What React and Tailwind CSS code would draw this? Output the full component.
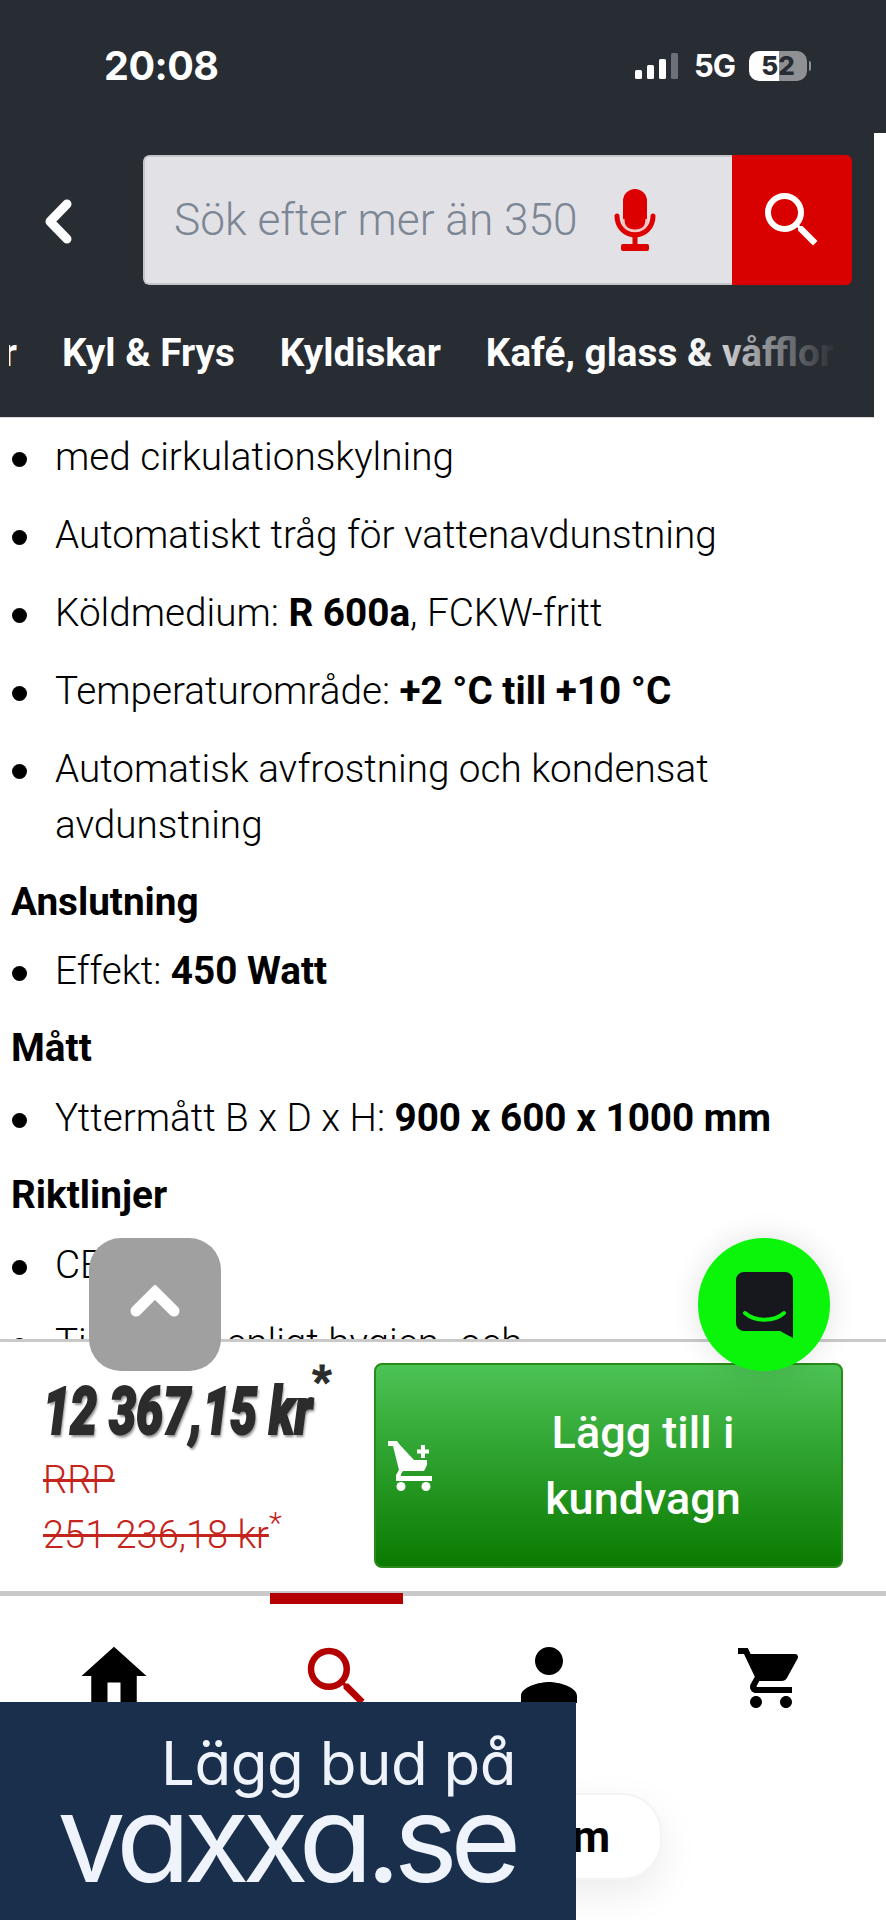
import React from 'react';

const roboto = "font-['Roboto',sans-serif]";

const icons = {
  search: 'M15.5 14h-.79l-.28-.27A6.471 6.471 0 0 0 16 9.5 6.5 6.5 0 1 0 9.5 16c1.61 0 3.09-.59 4.23-1.57l.27.28v.79l5 4.99L20.49 19l-4.99-5zm-6 0C7.01 14 5 11.99 5 9.5S7.01 5 9.5 5 14 7.01 14 9.5 11.99 14 9.5 14z',
  home: 'M10 20v-6h4v6h5v-8h3L12 3 2 12h3v8z',
  person: 'M12 12c2.21 0 4-1.79 4-4s-1.79-4-4-4-4 1.79-4 4 1.79 4 4 4zm0 2c-2.67 0-8 1.34-8 4v2h16v-2c0-2.66-5.33-4-8-4z',
  cart: 'M7 18c-1.1 0-1.99.9-1.99 2S5.9 22 7 22s2-.9 2-2-.9-2-2-2zM1 2v2h2l3.6 7.59-1.35 2.45c-.16.28-.25.61-.25.96 0 1.1.9 2 2 2h12v-2H7.42c-.14 0-.25-.11-.25-.25l.03-.12.9-1.63h7.45c.75 0 1.41-.41 1.75-1.03l3.58-6.49A1.003 1.003 0 0 0 20 4H5.21l-.94-2H1zm16 16c-1.1 0-1.99.9-1.99 2s.89 2 1.99 2 2-.9 2-2-.9-2-2-2z',
};

const Icon = ({ d, className }) => (
  <svg viewBox="0 0 24 24" fill="currentColor" className={className}>
    <path d={d} />
  </svg>
);

const Item = ({ children, className = '' }) => (
  <li className={`flex leading-[56px] ${className}`}>
    <span className="mt-[23px] ml-[12px] mr-[28px] h-[15px] w-[15px] shrink-0 rounded-full bg-black" />
    <span className="flex-1">{children}</span>
  </li>
);

const Heading = ({ children, className = '' }) => (
  <h3 className={`pl-[11px] text-[38.7px] font-bold leading-[56px] text-black ${className}`}>{children}</h3>
);

const StatusBar = () => (
  <div className="flex h-[133px] shrink-0 items-start bg-[#282c33] text-white">
    <span className="ml-[104px] mt-[45px] text-[39.5px] font-bold leading-[42px] font-['Inter',sans-serif] tracking-[-0.5px]">20:08</span>
    <div className="ml-auto mr-[75px] mt-[51px] flex items-center">
      <svg viewBox="0 0 43 26" className="h-[26px] w-[43px]">
        <rect x="0" y="17" width="7" height="9" rx="1.5" fill="#fff" />
        <rect x="12" y="12" width="7" height="14" rx="1.5" fill="#fff" />
        <rect x="24" y="6" width="7" height="20" rx="1.5" fill="#fff" />
        <rect x="36" y="0" width="7" height="26" rx="1.5" fill="#6d7076" />
      </svg>
      <span className="ml-[16px] text-[31px] font-bold leading-[30px] font-['Inter',sans-serif] tracking-[-1px]">5G</span>
      <div className="relative ml-[14px] flex h-[30px] w-[58px] items-center justify-center overflow-hidden rounded-[10px] bg-[linear-gradient(90deg,#ffffff_0%,#ffffff_52%,#8e9094_52%,#8e9094_100%)]">
        <span className="text-[26px] font-extrabold leading-[30px] text-[#282c33] font-['Inter',sans-serif]">52</span>
      </div>
      <span className="ml-[2px] h-[10px] w-[2px] rounded-r bg-[#8e9094]" />
    </div>
  </div>
);

const SearchHeader = () => (
  <div className="h-[285px] w-[874px] shrink-0 border-b border-[#d8d8d8] bg-[#282c33]">
    <div className="flex h-[174px] items-start pt-[22px]">
      <svg viewBox="0 0 29 45" className="ml-[43px] mt-[44px] h-[45px] w-[29px]" fill="none" stroke="#fff" strokeWidth="9" strokeLinecap="round" strokeLinejoin="round">
        <path d="M24 5 7 22.5 24 40" />
      </svg>
      <div className="ml-[71px] flex h-[130px] w-[709px] overflow-hidden rounded-[6px]">
        <div className="flex flex-1 items-center rounded-l-[6px] border-2 border-r-0 border-[#c5c5c9] bg-[#e2e2e6] pl-[29px]">
          <span className={`${roboto} text-[44.2px] font-light text-[#7c8694]`}>Sök efter mer än 350</span>
          <svg viewBox="0 0 42 62" className="ml-[36px] h-[62px] w-[42px]">
            <rect x="9" y="0" width="24" height="45" rx="12" fill="#dc0000" />
            <path d="M9 30c0 8 5 12 12 12s12-4 12-12" fill="none" stroke="#f6c6c6" strokeWidth="3" />
            <path d="M3 27c0 11 8 19 18 19s18-8 18-19" fill="none" stroke="#dc0000" strokeWidth="5" strokeLinecap="round" />
            <rect x="18.5" y="46" width="5" height="11" fill="#dc0000" />
            <rect x="7" y="55" width="28" height="7" rx="2" fill="#dc0000" />
          </svg>
        </div>
        <div className="flex w-[120px] items-center justify-center bg-[#d90000]">
          <Icon d={icons.search} className="h-[72px] w-[72px] text-white" />
        </div>
      </div>
    </div>
    <div className={`${roboto} relative flex h-[110px] items-start gap-[45px] overflow-hidden pl-[9px] pt-[24px] text-[38.7px] font-bold leading-[44px] whitespace-nowrap text-white`}>
      <span className="flex w-[8px] shrink-0 justify-end overflow-hidden">Tillbehör</span>
      <span>Kyl &amp; Frys</span>
      <span>Kyldiskar</span>
      <span className="shrink-0">Kafé, glass &amp; våfflor</span>
      <div className="absolute top-0 bottom-0 left-[690px] w-[184px] bg-[linear-gradient(90deg,rgba(40,44,51,0)_0%,rgba(40,44,51,1)_80%)]" />
    </div>
  </div>
);

const Details = () => (
  <div className={`${roboto} min-h-0 flex-1 overflow-hidden bg-white pt-[11px] text-[38.7px] font-light text-black`}>
    <ul className="space-y-[22px]">
      <Item>med cirkulationskylning</Item>
      <Item>Automatiskt tråg för vattenavdunstning</Item>
      <Item>Köldmedium: <b className="font-bold">R 600a</b>, FCKW-fritt</Item>
      <Item>Temperaturområde: <b className="font-bold">+2 °C till +10 °C</b></Item>
      <Item>Automatisk avfrostning och kondensat avdunstning</Item>
    </ul>
    <Heading className="mt-[21px]">Anslutning</Heading>
    <ul className="mt-[13px]">
      <Item>Effekt: <b className="font-bold">450 Watt</b></Item>
    </ul>
    <Heading className="mt-[21px]">Mått</Heading>
    <ul className="mt-[14px]">
      <Item>Yttermått B x D x H: <b className="font-bold">900 x 600 x 1000 mm</b></Item>
    </ul>
    <Heading className="mt-[21px]">Riktlinjer</Heading>
    <ul className="mt-[14px] space-y-[22px]">
      <Item>CE-märkt</Item>
      <Item>Tillverkad enligt hygien- och</Item>
    </ul>
  </div>
);

const PriceBar = () => (
  <div className="flex h-[257px] shrink-0 border-t-[3px] border-b-[5px] border-[#c9c9c9] bg-white pt-[21px] pl-[43px]">
    <div className="w-[331px] shrink-0">
      <div className="relative flex h-[82px] items-start">
        <span className={`${roboto} mt-[14px] inline-block origin-left scale-x-[0.73] text-[66px] leading-[70px] font-black whitespace-nowrap text-[#2c2c2c] italic [-webkit-text-stroke:2px_#2c2c2c] [text-shadow:2px_3px_3px_rgba(0,0,0,0.45)]`}>12 367,15 kr</span>
        <span className={`${roboto} absolute top-[-3px] left-[269px] text-[42px] leading-[42px] font-black text-[#2c2c2c] [-webkit-text-stroke:1px_#2c2c2c]`}>*</span>
      </div>
      <div className={`${roboto} mt-[7px] text-[38px] leading-[56px] font-light text-[#c4241c]`}>
        <div className="line-through">RRP</div>
        <div className="mt-[-1px]"><span className="line-through">251 236,18 kr</span><sup className="text-[30px] leading-none">*</sup></div>
      </div>
    </div>
    <button className={`${roboto} flex h-[205px] w-[469px] items-center rounded-[8px] border-2 border-[#2a8a1a] bg-[linear-gradient(180deg,#4cc355_0%,#0a7a00_100%)] text-white`}>
      <svg viewBox="0 0 46 50" className="ml-[12px] h-[50px] w-[46px] shrink-0" fill="#fff">
        <path d="M0 0h9l3 4 14 15h13v5l-3 6H15l-2 3v2h31v5H8v-6l3-5L5 5H0z" />
        <rect x="33" y="4" width="4" height="13" />
        <rect x="29" y="8.5" width="12" height="4" />
        <circle cx="13" cy="45.5" r="4.5" />
        <circle cx="38" cy="45.5" r="4.5" />
      </svg>
      <span className="ml-[11px] flex-1 text-center text-[45px] leading-[66px] font-medium">Lägg till i<br />kundvagn</span>
    </button>
  </div>
);

const BottomNav = () => (
  <div className="relative h-[324px] shrink-0 bg-white">
    <div className="absolute top-[-3px] left-[270px] h-[11px] w-[133px] bg-[#b50000]" />
    <div className="flex items-start">
      <Icon d={icons.home} className="ml-[75px] mt-[41px] h-[78px] w-[78px] text-black" />
      <Icon d={icons.search} className="ml-[145px] mt-[42px] h-[78px] w-[78px] text-[#b50000]" />
      <Icon d={icons.person} className="ml-[131px] mt-[37px] h-[84px] w-[84px] text-black" />
      <Icon d={icons.cart} className="ml-[144px] mt-[46px] h-[72px] w-[72px] text-black" />
    </div>
  </div>
);

export default function App() {
  return (
    <div className="relative flex h-[1920px] w-[886px] flex-col overflow-hidden bg-white">
      <StatusBar />
      <SearchHeader />
      <Details />
      <PriceBar />
      <BottomNav />

      {/* scroll to top */}
      <div className="absolute top-[1238px] left-[89px] flex h-[133px] w-[132px] items-center justify-center rounded-[32px] bg-[#a0a0a0]">
        <svg viewBox="0 0 50 32" className="-mt-[8px] h-[32px] w-[50px]" fill="none" stroke="#fff" strokeWidth="11" strokeLinecap="round" strokeLinejoin="miter">
          <path d="M6 26 25 7l19 19" />
        </svg>
      </div>

      {/* chat bubble */}
      <div className="absolute top-[1238px] left-[698px] flex h-[133px] w-[132px] items-center justify-center rounded-full bg-[#0bf50b] shadow-[0_0_30px_rgba(0,0,0,0.12)]">
        <svg viewBox="0 0 57 66" className="h-[66px] w-[57px]">
          <path d="M8 0h41a8 8 0 0 1 8 8v58L44 59H8a8 8 0 0 1-8-8V8a8 8 0 0 1 8-8z" fill="#16181d" />
          <path d="M9 41c10 9 29 9 39 0" fill="none" stroke="#0bf50b" strokeWidth="4" strokeLinecap="round" />
        </svg>
      </div>

      {/* pill behind the banner */}
      <div className={`${roboto} absolute top-[1793px] left-[440px] flex h-[87px] w-[222px] items-center justify-end rounded-[40px] border-2 border-[#f4f4f4] bg-white pr-[50px] text-[44px] font-bold text-black shadow-[0_14px_40px_rgba(0,0,0,0.08)]`}>
        m
      </div>

      {/* vaxxa ad */}
      <div className="absolute bottom-0 left-0 flex h-[218px] w-[576px] flex-col items-end bg-[#1a2f4b] pr-[60px] text-[#eef3fc] font-['Inter',sans-serif] [font-feature-settings:'cv11']">
        <span className="mt-[26px] text-[60px] leading-[70px] font-normal tracking-[-0.5px]">Lägg bud på</span>
        <span className="mt-[-10px] mr-[2px] text-[122px] leading-[100px] font-normal tracking-[-7.5px]">vaxxa.se</span>
      </div>
    </div>
  );
}
